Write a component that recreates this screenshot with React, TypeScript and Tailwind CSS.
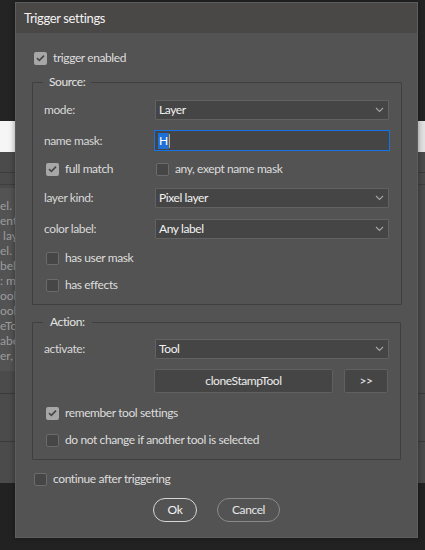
import React from "react";

function Check({ checked }: { checked: boolean }) {
  return checked ? (
    <span className="flex h-[13px] w-[13px] shrink-0 items-center justify-center rounded-[2px] bg-[#a7a7a7]">
      <svg width="9" height="8" viewBox="0 0 9 8">
        <path d="M1 4.2 L3.4 6.4 L8 1.6" fill="none" stroke="#474747" strokeWidth="1.6" />
      </svg>
    </span>
  ) : (
    <span className="h-[13px] w-[13px] shrink-0 rounded-[2px] border border-[#6b6b6b] bg-[#464646]" />
  );
}

function CheckRow({ checked, label, className = "" }: { checked: boolean; label: string; className?: string }) {
  return (
    <div className={"flex h-[20px] items-center gap-[6px] " + className}>
      <Check checked={checked} />
      <span className="whitespace-nowrap text-[#dedede]">{label}</span>
    </div>
  );
}

function Select({ value }: { value: string }) {
  return (
    <div className="flex h-[20px] w-[234px] items-center justify-between rounded-[1px] border border-[#626262] bg-[#454545] pl-[3px] pr-[4px]">
      <span className="text-[#f2f2f2]">{value}</span>
      <svg width="9" height="6" viewBox="0 0 9 6">
        <path d="M1 1 L4.5 4.5 L8 1" fill="none" stroke="#a5a5a5" strokeWidth="1.1" />
      </svg>
    </div>
  );
}

function Row({ label, children, className = "" }: { label: string; children: React.ReactNode; className?: string }) {
  return (
    <div className={"flex items-center " + className}>
      <span className="w-[111px] shrink-0 text-[#d8d8d8]">{label}</span>
      {children}
    </div>
  );
}

const bgLines = ["el.", "ent", " lay", "el.", "bel.", ": m", "ool:", "ool", "eTo", "abel", "er, a"];

export default function App() {
  return (
    <div className="relative h-[550px] w-[425px] overflow-hidden bg-[#232323] font-['Lato',sans-serif] text-[12px] leading-[16px] tracking-[-0.4px]">
      {/* background page */}
      <div className="flex h-full flex-col">
        <div className="h-[121px] bg-[#242424]" />
        <div className="h-[31px] bg-gradient-to-r from-[#f6f6f6] to-[#e2e2e2]" />
        <div className="flex h-[331px] flex-col bg-[#4b4b4b]">
          <div className="h-[21px] border-b border-[#3c3c3c]" />
          <div className="h-[12px] border-b border-[#3e3e3e]" />
          <div className="mt-[3px] flex h-[183px] w-[15px] flex-col overflow-hidden bg-[#535353] pt-[10px] text-[12px] tracking-normal text-[#9d9d9d]">
            {bgLines.map((t, i) => (
              <div key={i} className="h-[15px] overflow-hidden whitespace-pre leading-[15px]">{t}</div>
            ))}
          </div>
          <div className="h-[23px] border-b border-[#3a3a3a]" />
          <div className="h-[48px] border-b border-[#3a3a3a]" />
        </div>
        <div className="flex-1 bg-[#222222]" />
      </div>

      {/* dialog */}
      <div className="absolute left-[15px] top-[2px] flex w-[403px] flex-col border border-[#5d5d5d] bg-[#535353] shadow-[0_0_6px_rgba(0,0,0,0.4)]">
        <div className="flex h-[30px] items-center bg-[#4a4846] pl-[8px] text-[13px] tracking-[-0.35px] text-[#f2f2f2]">Trigger settings</div>

        <CheckRow checked label="trigger enabled" className="ml-[18px] mt-[15px]" />

        <fieldset className="mx-[16px] mt-[6px] rounded-[1px] border border-[#3f3f3f] px-[11px] pb-[9px] pt-[10px]">
          <legend className="ml-[-1px] px-[6px] leading-[16px] text-[#e4e4e4]">Source:</legend>
          <Row label="mode:" className="h-[20px]">
            <Select value="Layer" />
          </Row>
          <Row label="name mask:" className="mt-[10px] h-[21px]">
            <div className="ml-[-1px] flex h-[21px] w-[236px] items-center border border-[#1473e6] bg-[#454545] pl-[3px]">
              <span className="bg-[#1e6fd6] px-[1px] text-white">H</span>
              <span className="h-[14px] w-[1px] bg-[#f0a030]" />
            </div>
          </Row>
          <div className="mt-[8px] flex h-[20px] items-center">
            <CheckRow checked label="full match" className="w-[112px] pl-[2px]" />
            <CheckRow checked={false} label="any, exept name mask" />
          </div>
          <Row label="layer kind:" className="mt-[9px] h-[20px]">
            <Select value="Pixel layer" />
          </Row>
          <Row label="color label:" className="mt-[11px] h-[20px]">
            <Select value="Any label" />
          </Row>
          <CheckRow checked={false} label="has user mask" className="mt-[9px] pl-[2px]" />
          <CheckRow checked={false} label="has effects" className="mt-[7px] pl-[2px]" />
        </fieldset>

        <fieldset className="mx-[16px] mt-[9px] rounded-[1px] border border-[#3f3f3f] px-[11px] pb-[9px] pt-[9px]">
          <legend className="ml-[-1px] px-[7px] leading-[16px] text-[#e4e4e4]">Action:</legend>
          <Row label="activate:" className="h-[20px]">
            <Select value="Tool" />
          </Row>
          <div className="mt-[10px] flex h-[24px] items-center">
            <div className="ml-[110px] flex h-[24px] w-[179px] items-center justify-center rounded-[2px] border border-[#606060] bg-[#454545] text-[#ececec]">
              cloneStampTool
            </div>
            <div className="ml-[11px] flex h-[24px] w-[44px] items-center justify-center rounded-[2px] border border-[#606060] bg-[#454545] text-[#ececec]">
              &gt;&gt;
            </div>
          </div>
          <CheckRow checked label="remember tool settings" className="mt-[10px] pl-[2px]" />
          <CheckRow checked={false} label="do not change if another tool is selected" className="mt-[7px] pl-[2px]" />
        </fieldset>

        <CheckRow checked={false} label="continue after triggering" className="ml-[18px] mt-[9px]" />

        <div className="mb-[15px] mt-[9px] flex justify-center gap-[20px]">
          <div className="flex h-[24px] w-[44px] items-center justify-center rounded-full border-[1.5px] border-[#d6d6d6] text-[#f2f2f2]">Ok</div>
          <div className="flex h-[24px] w-[63px] items-center justify-center rounded-full border border-[#8a8a8a] text-[#e6e6e6]">Cancel</div>
        </div>
      </div>
    </div>
  );
}
